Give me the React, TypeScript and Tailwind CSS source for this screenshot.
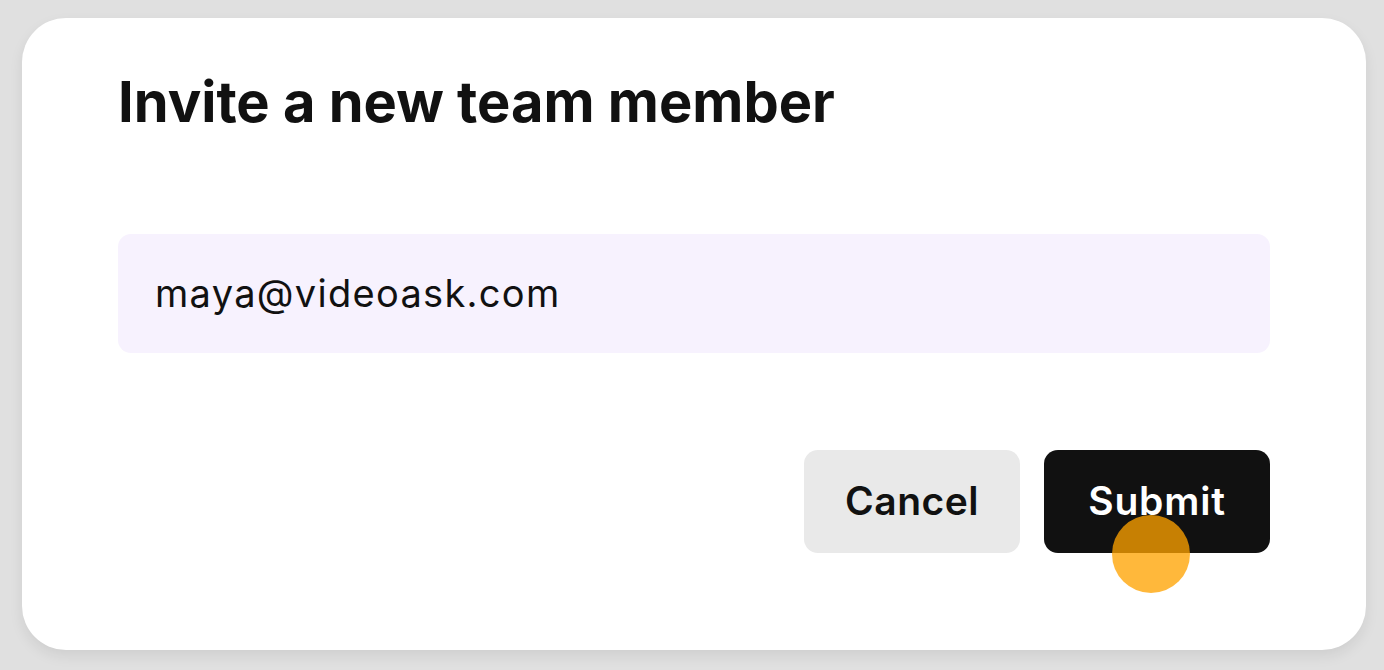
export default function App() {
  return (
    <div className="w-[1384px] h-[670px] bg-[#e0e0e0] pt-[18px] pl-[22px] pr-[18px] overflow-hidden" style={{ fontFamily: "Inter, 'Liberation Sans', sans-serif" }}>
      <div className="bg-white rounded-[44px] h-[632px] shadow-[0_6px_14px_rgba(0,0,0,0.08)] pl-[96px] pr-[96px] pt-[52px] flex flex-col">
        <h1 className="text-[56px] leading-[64px] font-bold text-[#111] tracking-[0px]">Invite a new team member</h1>
        <div className="mt-[100px] h-[119px] rounded-[13px] bg-[#f7f2fe] flex items-center pl-[37px] text-[38px] tracking-[1.3px] text-[#111]">
          maya@videoask.com
        </div>
        <div className="mt-[97px] flex justify-end gap-[24px]">
          <button className="w-[216px] h-[103px] rounded-[14px] bg-[#e9e9e9] text-[39px] font-semibold tracking-[0.5px] text-[#111]">Cancel</button>
          <div className="relative">
            <button className="w-[226px] h-[103px] rounded-[14px] bg-[#111] text-[39px] font-semibold tracking-[0.8px] text-white">Submit</button>
            <div className="absolute left-[68px] top-[65px] w-[78px] h-[78px] rounded-full bg-[rgba(255,163,0,0.77)]" />
          </div>
        </div>
      </div>
    </div>
  );
}
